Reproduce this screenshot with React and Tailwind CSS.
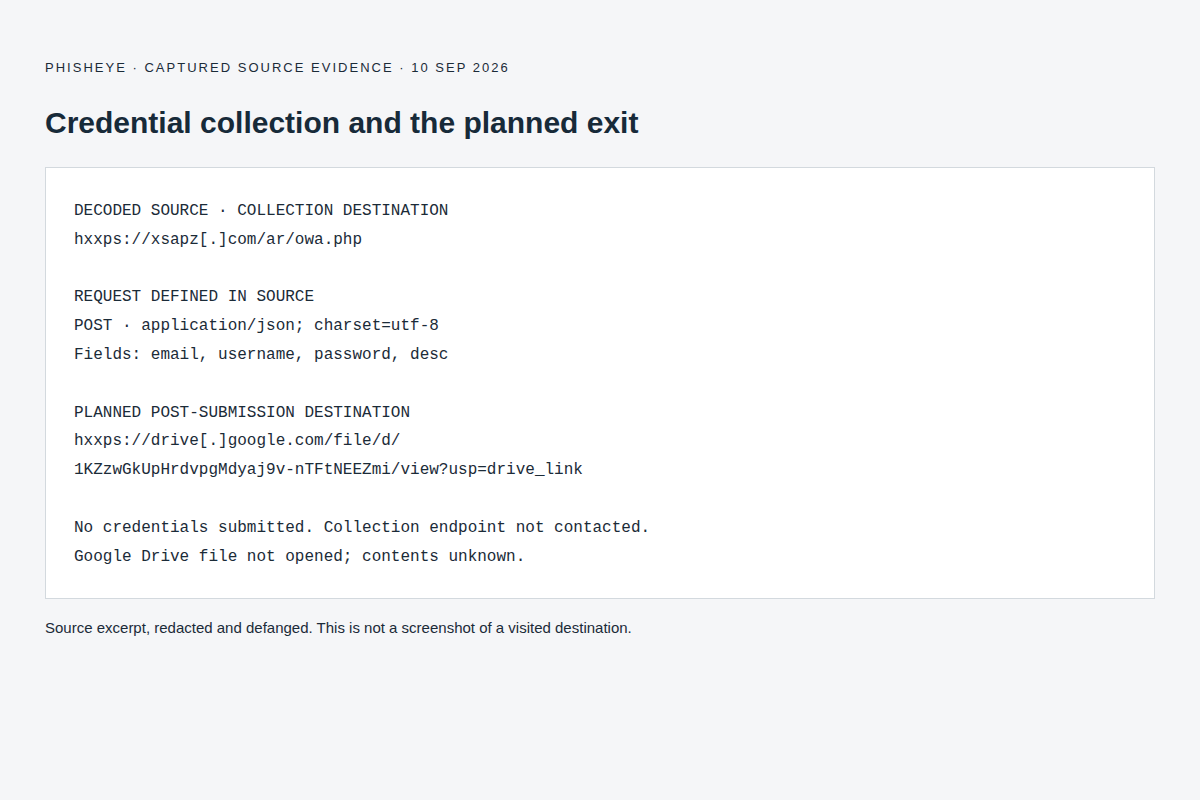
export default function App() {
  const lines = [
    "DECODED SOURCE · COLLECTION DESTINATION",
    "hxxps://xsapz[.]com/ar/owa.php",
    "",
    "REQUEST DEFINED IN SOURCE",
    "POST · application/json; charset=utf-8",
    "Fields: email, username, password, desc",
    "",
    "PLANNED POST-SUBMISSION DESTINATION",
    "hxxps://drive[.]google.com/file/d/",
    "1KZzwGkUpHrdvpgMdyaj9v-nTFtNEEZmi/view?usp=drive_link",
    "",
    "No credentials submitted. Collection endpoint not contacted.",
    "Google Drive file not opened; contents unknown.",
  ];

  return (
    <div className="min-h-[800px] bg-[#f5f6f8] px-[45px] pt-[59px] font-['Liberation_Sans',Arial,sans-serif] text-[#1b2b38]">
      <p className="text-[13px] leading-[18px] tracking-[0.155em] uppercase">
        PHISHEYE · Captured source evidence · 10 Sep 2026
      </p>
      <h1 className="mt-[28px] text-[30px] leading-[36px] font-bold text-[#172a39]">
        Credential collection and the planned exit
      </h1>
      <div className="mt-[26px] border border-[#d3d9de] bg-white px-7 pt-[29px] pb-[27px]">
        <pre className="font-['Liberation_Mono','Courier_New',monospace] text-[16px] leading-[28.8px] text-[#1b2b38] whitespace-pre-wrap">
          {lines.join("\n")}
        </pre>
      </div>
      <p className="mt-[19px] text-[15px] leading-[20px]">
        Source excerpt, redacted and defanged. This is not a screenshot of a visited destination.
      </p>
    </div>
  );
}
